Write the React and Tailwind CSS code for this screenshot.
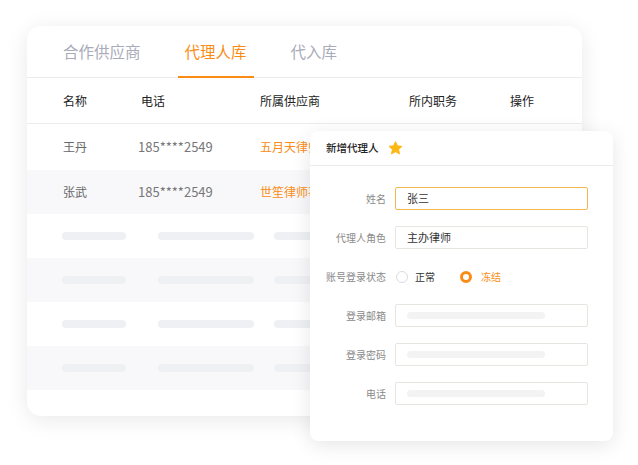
import React from "react";

const font = { fontFamily: '"Noto Sans CJK SC", "Noto Sans", sans-serif' };

function Skel({ w, ml }) {
  return <div className={"h-[8px] rounded-full bg-[#eff0f3] " + ml} style={{ width: w }} />;
}

function SkelRow({ gray }) {
  return (
    <div className={gray ? "flex h-[44px] items-center pl-[35px] bg-[#f8f8fa]" : "flex h-[44px] items-center pl-[35px] bg-white"}>
      <Skel w={64} ml="" />
      <Skel w={96} ml="ml-[32px]" />
      <Skel w={140} ml="ml-[20px]" />
    </div>
  );
}

function Field({ label, children }) {
  return (
    <div className="flex h-[23px] items-center">
      <div className="w-[76px] shrink-0 text-right text-[10px] text-[#8a8a8a] whitespace-nowrap">{label}</div>
      <div className="ml-[9px] w-[193px]">{children}</div>
    </div>
  );
}

function Input({ value, skel }) {
  return (
    <div className="flex h-[23px] items-center rounded-[2px] border border-[#e8e4e0] px-[11px] text-[11px] text-[#333]">
      {value}
      {skel && <div className="h-[7px] w-[138px] rounded-full bg-[#f3f3f3]" />}
    </div>
  );
}

export default function App() {
  return (
    <div className="relative h-[465px] w-[638px] overflow-hidden bg-white" style={font}>
      <div className="pl-[27px] pt-[26px]">
        <div className="h-[390px] w-[555px] overflow-hidden rounded-[14px] bg-white shadow-[0_4px_22px_rgba(0,0,0,0.09)]">
          {/* tabs */}
          <div className="flex h-[52px] items-stretch border-b border-[#ececf0] pl-[29px]">
            <div className="flex items-center px-[7px] text-[15.5px] text-[#a9abb9]">合作供应商</div>
            <div className="relative ml-[30px] flex items-center px-[7px] text-[15.5px] text-[#fa8c16]">
              代理人库
              <div className="absolute bottom-[-1px] left-0 right-0 h-[2.5px] bg-[#fa8c16]" />
            </div>
            <div className="ml-[30px] flex items-center px-[7px] text-[15.5px] text-[#a9abb9]">代入库</div>
          </div>
          {/* header */}
          <div className="flex h-[46px] items-center border-b border-[#ececf0] text-[12px] text-[#222]">
            <div className="w-[114px] pl-[36px]">名称</div>
            <div className="w-[119px]">电话</div>
            <div className="w-[149px]">所属供应商</div>
            <div className="w-[101px]">所内职务</div>
            <div>操作</div>
          </div>
          {/* rows */}
          <div className="flex h-[46px] items-center text-[12px] text-[#666]">
            <div className="w-[111px] pl-[36px]">王丹</div>
            <div className="w-[122px] text-[13px] text-[#777]">185****2549</div>
            <div className="whitespace-nowrap text-[#fa8c16]">五月天律师事务所</div>
          </div>
          <div className="flex h-[44px] items-center bg-[#f8f8fa] text-[12px] text-[#666]">
            <div className="w-[111px] pl-[36px]">张武</div>
            <div className="w-[122px] text-[13px] text-[#777]">185****2549</div>
            <div className="whitespace-nowrap text-[#fa8c16]">世笙律师事务所</div>
          </div>
          <SkelRow />
          <SkelRow gray />
          <SkelRow />
          <SkelRow gray />
        </div>
      </div>

      {/* modal */}
      <div className="absolute left-[310px] top-[131px] h-[310px] w-[303px] rounded-[8px] bg-white shadow-[0_4px_20px_rgba(0,0,0,0.1)]">
        <div className="flex h-[35px] items-center border-b border-[#ececf0] pl-[16px]">
          <span className="text-[10.5px] font-medium text-[#222]">新增代理人</span>
          <svg className="ml-[9px]" width="15" height="14" viewBox="0 0 24 23">
            <path
              d="M12 1l3.2 6.9 7.5.9-5.6 5.1 1.5 7.4L12 17.6 5.4 21.3l1.5-7.4L1.3 8.8l7.5-.9z"
              fill="#fcb814"
              stroke="#fcb814"
              strokeWidth="1.5"
              strokeLinejoin="round"
            />
          </svg>
        </div>
        <div className="flex flex-col gap-[16px] pt-[21px]">
          <Field label="姓名">
            <div className="flex h-[23px] items-center rounded-[2px] border border-[#f4b850] px-[11px] text-[11px] text-[#333]">
              张三
            </div>
          </Field>
          <Field label="代理人角色">
            <Input value="主办律师" />
          </Field>
          <Field label="账号登录状态">
            <div className="flex items-center text-[10px]">
              <div className="ml-[1px] h-[12px] w-[12px] rounded-full border border-[#dcdcdc]" />
              <span className="ml-[7px] text-[#333]">正常</span>
              <div className="ml-[25px] h-[12px] w-[12px] rounded-full border-[3px] border-[#fa8c16] bg-white" />
              <span className="ml-[9px] text-[#fa8c16]">冻结</span>
            </div>
          </Field>
          <Field label="登录邮箱">
            <Input skel />
          </Field>
          <Field label="登录密码">
            <Input skel />
          </Field>
          <Field label="电话">
            <Input skel />
          </Field>
        </div>
      </div>
    </div>
  );
}
